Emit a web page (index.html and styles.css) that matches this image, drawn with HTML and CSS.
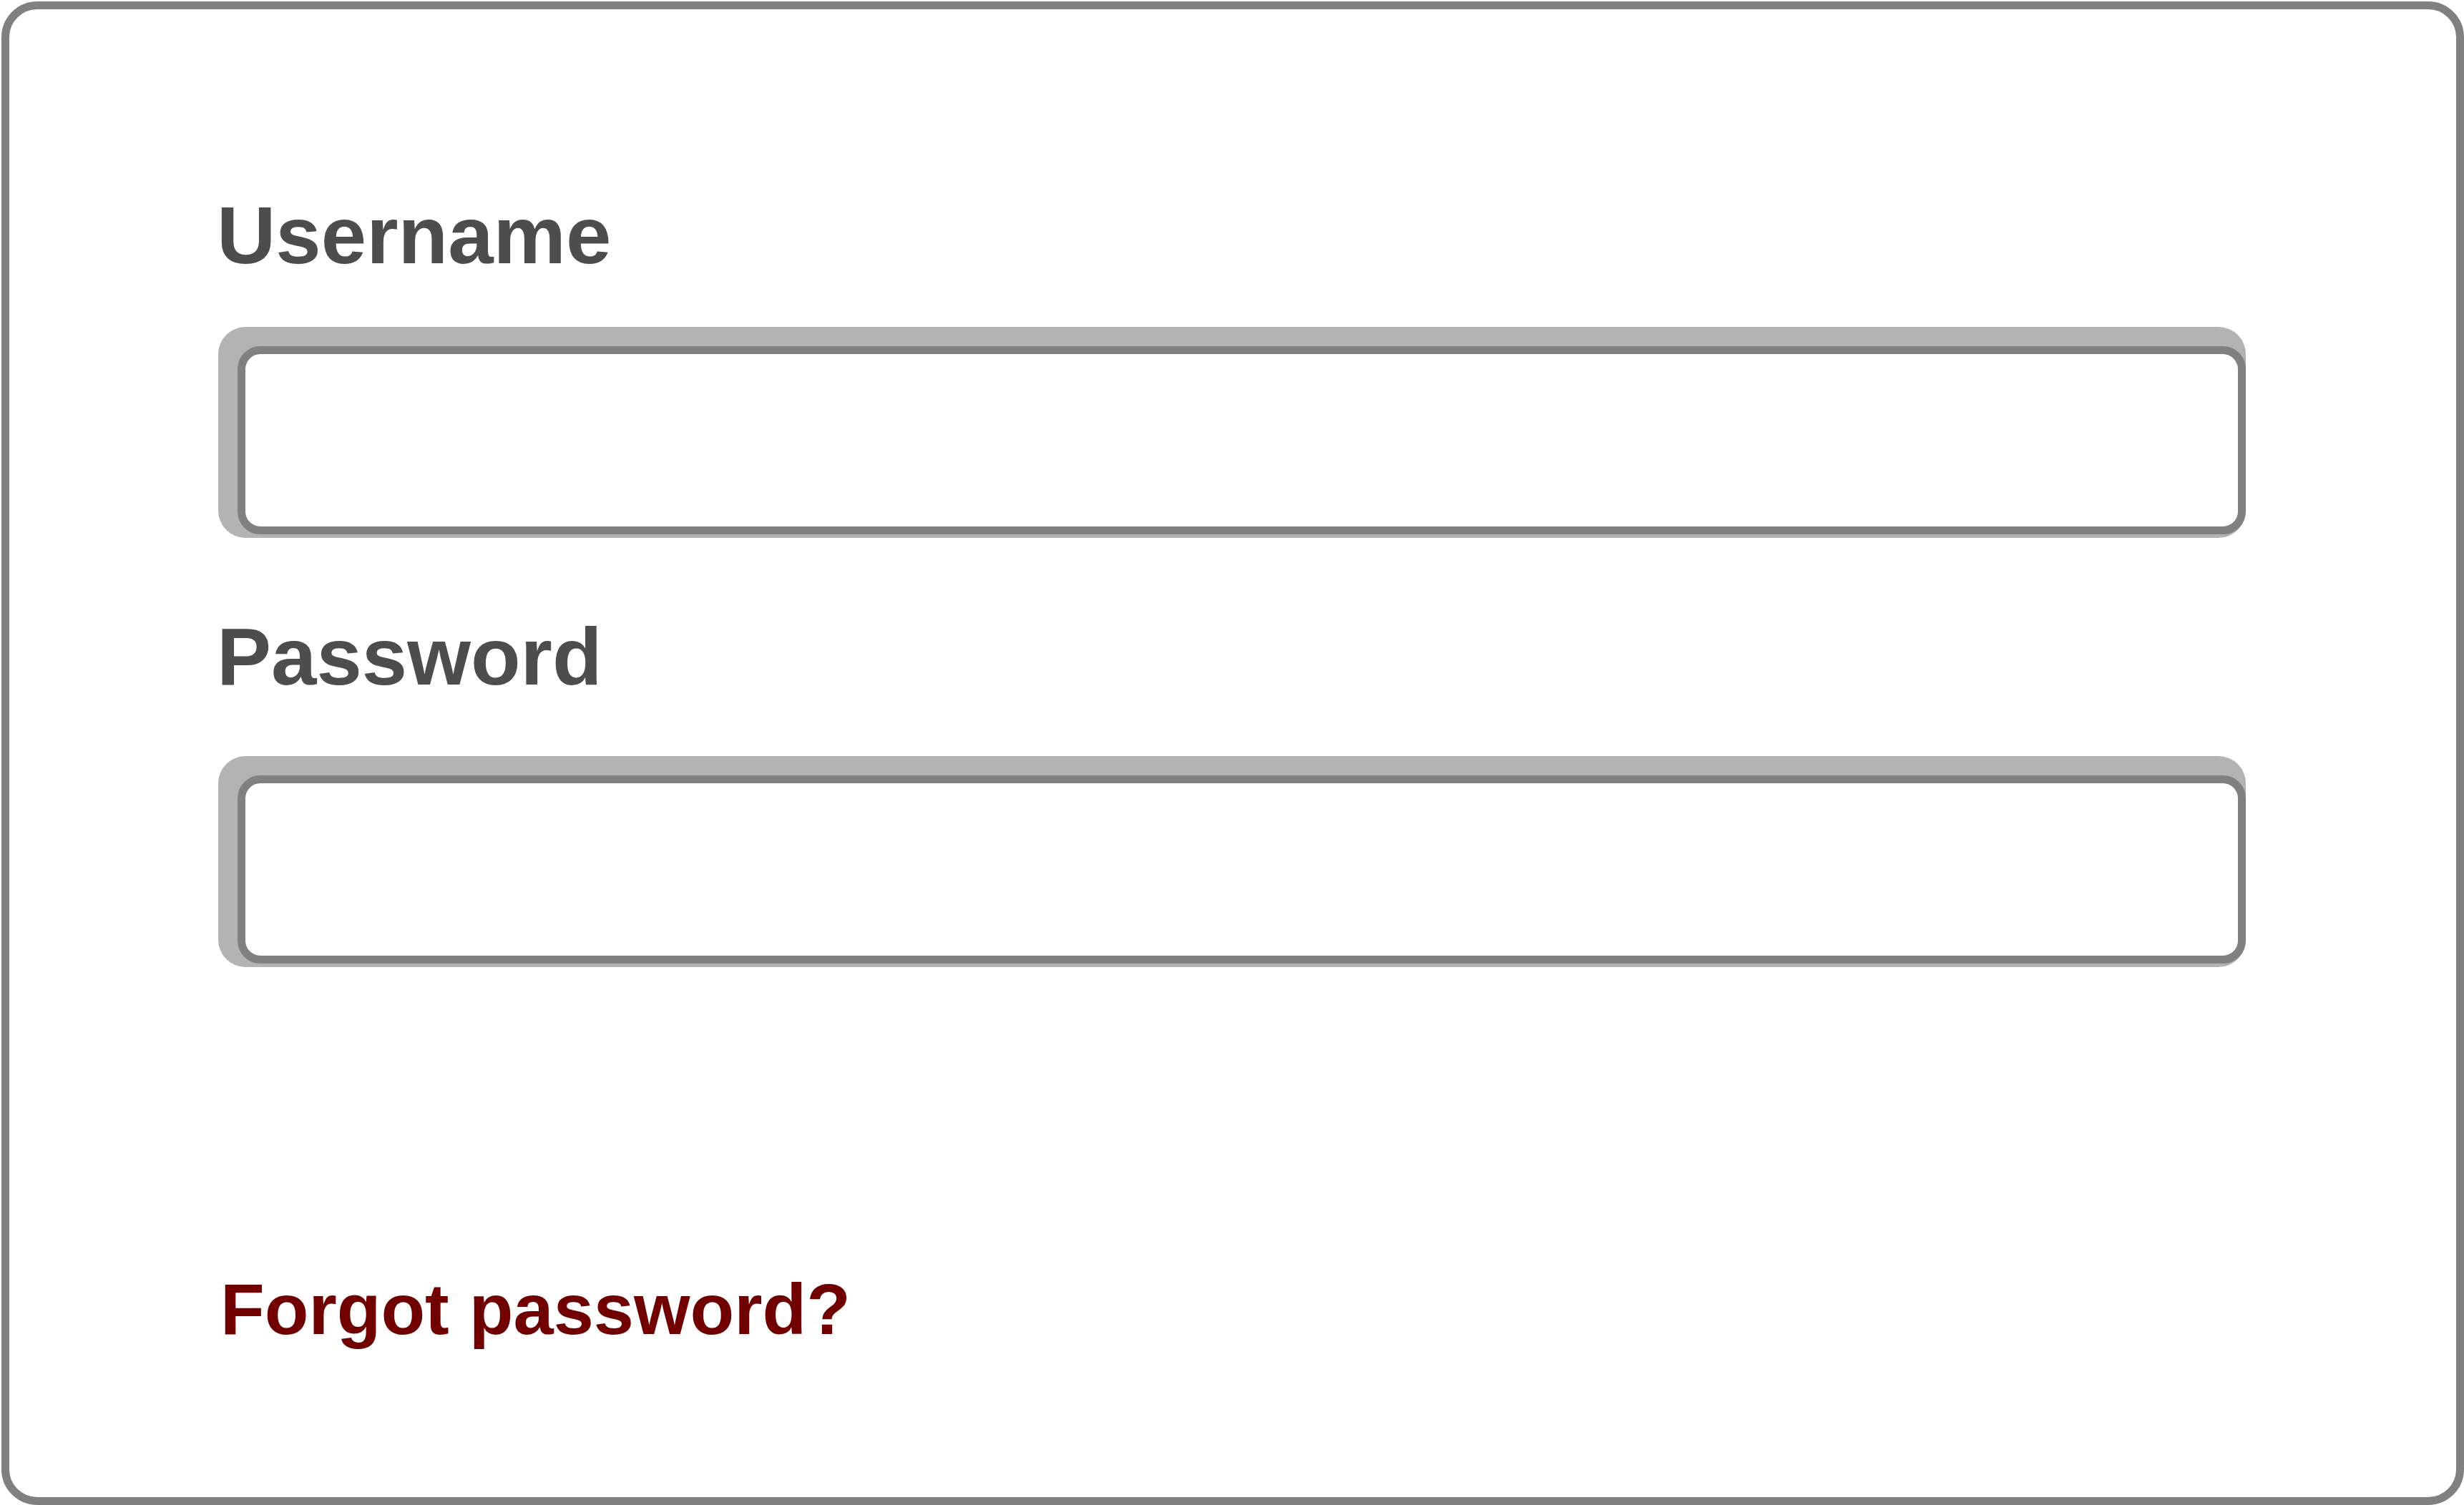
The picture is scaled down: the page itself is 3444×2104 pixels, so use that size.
FILE: index.html
```html
<!DOCTYPE html>
<html lang="en">
<head>
<meta charset="utf-8">
<title>Login</title>
<link rel="stylesheet" href="styles.css">
</head>
<body>
<div class="card">
  <form class="form">
    <label class="label label-user" for="username">Username</label>
    <div class="field field-user">
      <input class="input" id="username" type="text">
    </div>
    <label class="label label-pass" for="password">Password</label>
    <div class="field field-pass">
      <input class="input" id="password" type="password">
    </div>
    <a class="forgot" href="#">Forgot password?</a>
  </form>
</div>
</body>
</html>
```

FILE: styles.css
```css
html, body {
  margin: 0;
  padding: 0;
  background: #ffffff;
  overflow: hidden;
}

.card {
  box-sizing: border-box;
  width: 3442px;
  height: 2102px;
  margin: 2px 0 0 2px;
  border: 11px solid #808080;
  border-radius: 50px;
  background: #ffffff;
}

.form {
  display: flex;
  flex-direction: column;
  align-items: flex-start;
  padding: 259px 0 0 290px;
  margin: 0;
}

.label {
  display: block;
  font-family: "Liberation Sans", Arial, sans-serif;
  font-weight: 700;
  font-size: 114px;
  line-height: 1;
  color: #4d4d4d;
}

.label-pass {
  margin-top: 109px;
}

.field {
  box-sizing: border-box;
  width: 2834px;
  height: 295px;
  margin-left: 2px;
  padding: 27px 0 5px 27px;
  background: #b3b3b3;
  border-radius: 38px;
}

.field-user {
  margin-top: 71px;
}

.field-pass {
  margin-top: 82px;
}

.input {
  display: block;
  box-sizing: border-box;
  width: 100%;
  height: 100%;
  margin: 0;
  padding: 0 30px;
  border: 11px solid #808080;
  border-radius: 32px;
  background: #ffffff;
  outline: none;
  font-family: "Liberation Sans", Arial, sans-serif;
  font-size: 80px;
}

.forgot {
  display: block;
  margin-top: 428px;
  margin-left: 5px;
  font-family: "Liberation Sans", Arial, sans-serif;
  font-weight: 700;
  font-size: 101px;
  line-height: 1;
  color: #700000;
  text-decoration: none;
}
```
